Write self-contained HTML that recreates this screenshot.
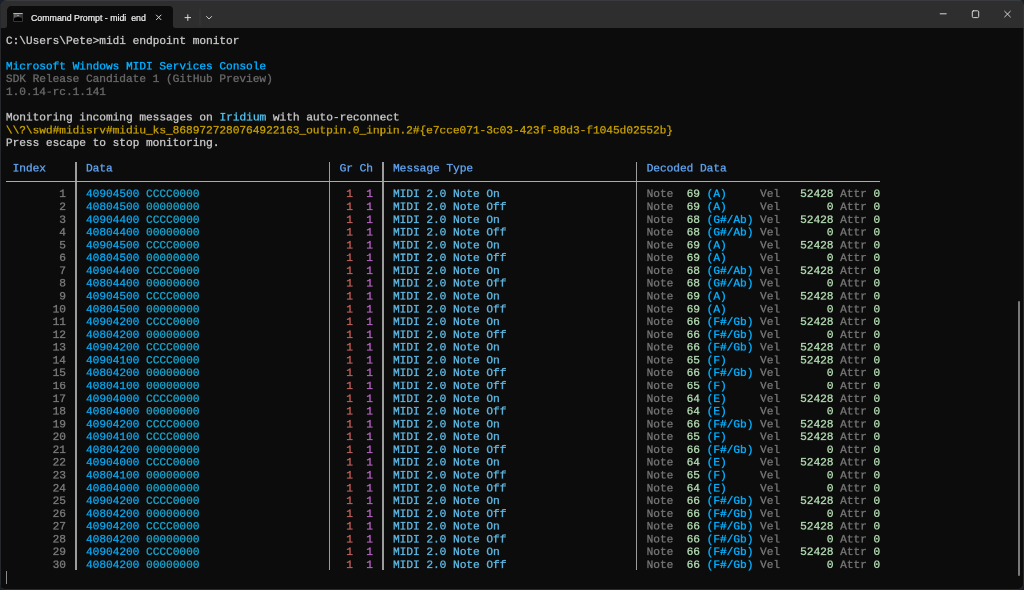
<!DOCTYPE html>
<html><head><meta charset="utf-8"><style>
html,body{margin:0;padding:0;width:1024px;height:590px;overflow:hidden;background:#18202b}
#frtr{position:absolute;left:1018px;top:0;width:6px;height:28px;background:#343639;border-top-right-radius:7px}
#frame{position:absolute;left:0;top:0;width:1024px;height:590px;background:#282a2e;border-radius:7px 7px 6px 6px}
#win{position:absolute;left:0;top:0;width:1022.6px;height:588.6px;background:#0c0c0c;border-radius:7px 4px 5px 5px;overflow:hidden}
#sb{position:absolute;left:1018.1px;top:300.8px;width:2px;height:275px;border-radius:1px;background:#7a7a7a}
#cur{position:absolute;left:5.9px;top:571px;width:1.1px;height:13px;background:#8a8a8a}
#lb{position:absolute;left:0;top:0;width:1.3px;height:590px;background:#26282c}
#bar{position:absolute;left:0;top:0;width:1024px;height:28px;background:#2e2e2e}
#topb{position:absolute;left:0;top:0;width:1024px;height:1.2px;background:#393b3e}
#icon{position:absolute;left:12.7px;top:12.7px;width:10.7px;height:9.1px;background:#363636;border-radius:1.2px;overflow:hidden}
#ibar{position:absolute;left:0;top:0;width:10.7px;height:1.5px;background:#b4b4b4}
#ibody{position:absolute;left:1.2px;top:1.8px;width:8.4px;height:6.3px;background:linear-gradient(90deg,#666,#4a4a4a 60%,#333)}
#idot{position:absolute;left:1.2px;top:4.0px;width:8.4px;height:4.1px;background:#000;border-radius:4.2px 4.2px 0 0 / 2px 2px 0 0}
#ilt{position:absolute;left:4.3px;top:2.3px;width:1.6px;height:1.4px;background:#9a9a9a;border-radius:1px}
#tabfoot{position:absolute;left:3px;top:24px;width:174px;height:4.2px;background:#0c0c0c}
#barL{position:absolute;left:0;top:1.2px;width:7px;height:27px;background:#2e2e2e;border-bottom-right-radius:2.5px}
#barR{position:absolute;left:172.6px;top:1.2px;width:852px;height:27px;background:#2e2e2e;border-bottom-left-radius:2.5px}
#tab{position:absolute;left:7px;top:6px;width:165.6px;height:22.2px;background:#0c0c0c;border-radius:4.5px 4px 0 0}
.t{position:absolute;white-space:pre;font-family:"Liberation Mono",monospace;font-size:22.4px;letter-spacing:-0.0942px;line-height:25.572px;height:25.572px;-webkit-text-stroke:0.72px currentColor}
#txt{position:absolute;left:0;top:0;width:2048px;height:1180px;transform-origin:0 0;transform:scale(0.5);will-change:transform}
.vs{position:absolute;width:1.5px;background:#9c9c9c}
.hs{position:absolute;height:1.5px;background:#aaaaaa}
#title{position:absolute;left:31px;top:11.8px;width:114.5px;overflow:hidden;font-family:"Liberation Sans",sans-serif;font-size:8.8px;line-height:12px;color:#f2f2f2;white-space:pre;-webkit-text-stroke:0.2px #f2f2f2;will-change:transform}
</style></head><body>
<div id="frame"></div>
<div id="frtr"></div>
<div id="win">

<div id="bar"></div>
<div id="topb"></div>
<div id="tab"></div>
<div id="tabfoot"></div>
<div id="barL"></div>
<div id="barR"></div>
<div id="icon"><div id="ibar"></div><div id="ibody"></div><div id="idot"></div><div id="ilt"></div></div>
<div id="title">Command Prompt - midi  end</div>
<svg id="svgc" width="1024" height="30" style="position:absolute;left:0;top:0">
 <g stroke="#d6d6d6" stroke-width="1" fill="none" stroke-linecap="square">
  <path d="M156.1 14.8 L161.3 20.0 M161.3 14.8 L156.1 20.0" stroke-linecap="butt"/>
  <path d="M184.6 17.6 H191.0 M187.8 14.4 V20.8" stroke="#dcdcdc" stroke-linecap="butt"/>
  <path d="M206.3 16.2 L209.1 19.0 L211.9 16.2" stroke="#cfcfcf" stroke-linecap="butt"/>
  <path d="M939.8 13.8 H946.6" stroke-linecap="butt"/>
  <rect x="972.3" y="10.8" width="6.4" height="6.8" rx="1.1"/>
  <path d="M1004.4 11.0 L1010.6 17.2 M1010.6 11.0 L1004.4 17.2" stroke-linecap="butt"/>
 </g>
 <path d="M200 9 V25.5" stroke="#383838" stroke-width="1"/>
</svg>

<div id="txt">
<div class="t" style="left:11.800px;top:69.600px;color:#c2c2c2">C:\Users\Pete&gt;midi endpoint monitor</div>
<div class="t" style="left:11.800px;top:120.744px;color:#00afff">Microsoft Windows MIDI Services Console</div>
<div class="t" style="left:11.800px;top:146.316px;color:#666666">SDK Release Candidate 1 (GitHub Preview)</div>
<div class="t" style="left:11.800px;top:171.888px;color:#666666">1.0.14-rc.1.141</div>
<div class="t" style="left:11.800px;top:223.032px;color:#c2c2c2">Monitoring incoming messages on </div>
<div class="t" style="left:438.936px;top:223.032px;color:#50c0ec">Iridium</div>
<div class="t" style="left:532.372px;top:223.032px;color:#c2c2c2"> with auto-reconnect</div>
<div class="t" style="left:11.800px;top:248.604px;color:#c09b00">\\?\swd#midisrv#midiu_ks_8689727280764922163_outpin.0_inpin.2#{e7cce071-3c03-423f-88d3-f1045d02552b}</div>
<div class="t" style="left:11.800px;top:274.176px;color:#c2c2c2">Press escape to stop monitoring.</div>
<div class="t" style="left:25.148px;top:325.320px;color:#5fa0ea">Index</div>
<div class="t" style="left:171.976px;top:325.320px;color:#5fa0ea">Data</div>
<div class="t" style="left:679.200px;top:325.320px;color:#5fa0ea">Gr Ch</div>
<div class="t" style="left:785.984px;top:325.320px;color:#5fa0ea">Message Type</div>
<div class="t" style="left:1293.208px;top:325.320px;color:#5fa0ea">Decoded Data</div>
<div class="t" style="left:118.584px;top:376.464px;color:#787878">1</div>
<div class="t" style="left:171.976px;top:376.464px;color:#0aa0e6">40904500</div>
<div class="t" style="left:292.108px;top:376.464px;color:#16a0c8">CCCC0000</div>
<div class="t" style="left:692.548px;top:376.464px;color:#c45f59">1</div>
<div class="t" style="left:732.592px;top:376.464px;color:#b662c4">1</div>
<div class="t" style="left:785.984px;top:376.464px;color:#5cb4de">MIDI 2.0 Note On</div>
<div class="t" style="left:1293.208px;top:376.464px;color:#737373">Note</div>
<div class="t" style="left:1373.296px;top:376.464px;color:#afd7af">69</div>
<div class="t" style="left:1413.340px;top:376.464px;color:#00afff">(A)</div>
<div class="t" style="left:1520.124px;top:376.464px;color:#737373">Vel</div>
<div class="t" style="left:1600.212px;top:376.464px;color:#afd7af">52428</div>
<div class="t" style="left:1680.300px;top:376.464px;color:#737373">Attr</div>
<div class="t" style="left:1747.040px;top:376.464px;color:#afd7af">0</div>
<div class="t" style="left:118.584px;top:402.036px;color:#787878">2</div>
<div class="t" style="left:171.976px;top:402.036px;color:#0aa0e6">40804500</div>
<div class="t" style="left:292.108px;top:402.036px;color:#16a0c8">00000000</div>
<div class="t" style="left:692.548px;top:402.036px;color:#c45f59">1</div>
<div class="t" style="left:732.592px;top:402.036px;color:#b662c4">1</div>
<div class="t" style="left:785.984px;top:402.036px;color:#5cb4de">MIDI 2.0 Note Off</div>
<div class="t" style="left:1293.208px;top:402.036px;color:#737373">Note</div>
<div class="t" style="left:1373.296px;top:402.036px;color:#afd7af">69</div>
<div class="t" style="left:1413.340px;top:402.036px;color:#00afff">(A)</div>
<div class="t" style="left:1520.124px;top:402.036px;color:#737373">Vel</div>
<div class="t" style="left:1653.604px;top:402.036px;color:#afd7af">0</div>
<div class="t" style="left:1680.300px;top:402.036px;color:#737373">Attr</div>
<div class="t" style="left:1747.040px;top:402.036px;color:#afd7af">0</div>
<div class="t" style="left:118.584px;top:427.608px;color:#787878">3</div>
<div class="t" style="left:171.976px;top:427.608px;color:#0aa0e6">40904400</div>
<div class="t" style="left:292.108px;top:427.608px;color:#16a0c8">CCCC0000</div>
<div class="t" style="left:692.548px;top:427.608px;color:#c45f59">1</div>
<div class="t" style="left:732.592px;top:427.608px;color:#b662c4">1</div>
<div class="t" style="left:785.984px;top:427.608px;color:#5cb4de">MIDI 2.0 Note On</div>
<div class="t" style="left:1293.208px;top:427.608px;color:#737373">Note</div>
<div class="t" style="left:1373.296px;top:427.608px;color:#afd7af">68</div>
<div class="t" style="left:1413.340px;top:427.608px;color:#00afff">(G#/Ab)</div>
<div class="t" style="left:1520.124px;top:427.608px;color:#737373">Vel</div>
<div class="t" style="left:1600.212px;top:427.608px;color:#afd7af">52428</div>
<div class="t" style="left:1680.300px;top:427.608px;color:#737373">Attr</div>
<div class="t" style="left:1747.040px;top:427.608px;color:#afd7af">0</div>
<div class="t" style="left:118.584px;top:453.180px;color:#787878">4</div>
<div class="t" style="left:171.976px;top:453.180px;color:#0aa0e6">40804400</div>
<div class="t" style="left:292.108px;top:453.180px;color:#16a0c8">00000000</div>
<div class="t" style="left:692.548px;top:453.180px;color:#c45f59">1</div>
<div class="t" style="left:732.592px;top:453.180px;color:#b662c4">1</div>
<div class="t" style="left:785.984px;top:453.180px;color:#5cb4de">MIDI 2.0 Note Off</div>
<div class="t" style="left:1293.208px;top:453.180px;color:#737373">Note</div>
<div class="t" style="left:1373.296px;top:453.180px;color:#afd7af">68</div>
<div class="t" style="left:1413.340px;top:453.180px;color:#00afff">(G#/Ab)</div>
<div class="t" style="left:1520.124px;top:453.180px;color:#737373">Vel</div>
<div class="t" style="left:1653.604px;top:453.180px;color:#afd7af">0</div>
<div class="t" style="left:1680.300px;top:453.180px;color:#737373">Attr</div>
<div class="t" style="left:1747.040px;top:453.180px;color:#afd7af">0</div>
<div class="t" style="left:118.584px;top:478.752px;color:#787878">5</div>
<div class="t" style="left:171.976px;top:478.752px;color:#0aa0e6">40904500</div>
<div class="t" style="left:292.108px;top:478.752px;color:#16a0c8">CCCC0000</div>
<div class="t" style="left:692.548px;top:478.752px;color:#c45f59">1</div>
<div class="t" style="left:732.592px;top:478.752px;color:#b662c4">1</div>
<div class="t" style="left:785.984px;top:478.752px;color:#5cb4de">MIDI 2.0 Note On</div>
<div class="t" style="left:1293.208px;top:478.752px;color:#737373">Note</div>
<div class="t" style="left:1373.296px;top:478.752px;color:#afd7af">69</div>
<div class="t" style="left:1413.340px;top:478.752px;color:#00afff">(A)</div>
<div class="t" style="left:1520.124px;top:478.752px;color:#737373">Vel</div>
<div class="t" style="left:1600.212px;top:478.752px;color:#afd7af">52428</div>
<div class="t" style="left:1680.300px;top:478.752px;color:#737373">Attr</div>
<div class="t" style="left:1747.040px;top:478.752px;color:#afd7af">0</div>
<div class="t" style="left:118.584px;top:504.324px;color:#787878">6</div>
<div class="t" style="left:171.976px;top:504.324px;color:#0aa0e6">40804500</div>
<div class="t" style="left:292.108px;top:504.324px;color:#16a0c8">00000000</div>
<div class="t" style="left:692.548px;top:504.324px;color:#c45f59">1</div>
<div class="t" style="left:732.592px;top:504.324px;color:#b662c4">1</div>
<div class="t" style="left:785.984px;top:504.324px;color:#5cb4de">MIDI 2.0 Note Off</div>
<div class="t" style="left:1293.208px;top:504.324px;color:#737373">Note</div>
<div class="t" style="left:1373.296px;top:504.324px;color:#afd7af">69</div>
<div class="t" style="left:1413.340px;top:504.324px;color:#00afff">(A)</div>
<div class="t" style="left:1520.124px;top:504.324px;color:#737373">Vel</div>
<div class="t" style="left:1653.604px;top:504.324px;color:#afd7af">0</div>
<div class="t" style="left:1680.300px;top:504.324px;color:#737373">Attr</div>
<div class="t" style="left:1747.040px;top:504.324px;color:#afd7af">0</div>
<div class="t" style="left:118.584px;top:529.896px;color:#787878">7</div>
<div class="t" style="left:171.976px;top:529.896px;color:#0aa0e6">40904400</div>
<div class="t" style="left:292.108px;top:529.896px;color:#16a0c8">CCCC0000</div>
<div class="t" style="left:692.548px;top:529.896px;color:#c45f59">1</div>
<div class="t" style="left:732.592px;top:529.896px;color:#b662c4">1</div>
<div class="t" style="left:785.984px;top:529.896px;color:#5cb4de">MIDI 2.0 Note On</div>
<div class="t" style="left:1293.208px;top:529.896px;color:#737373">Note</div>
<div class="t" style="left:1373.296px;top:529.896px;color:#afd7af">68</div>
<div class="t" style="left:1413.340px;top:529.896px;color:#00afff">(G#/Ab)</div>
<div class="t" style="left:1520.124px;top:529.896px;color:#737373">Vel</div>
<div class="t" style="left:1600.212px;top:529.896px;color:#afd7af">52428</div>
<div class="t" style="left:1680.300px;top:529.896px;color:#737373">Attr</div>
<div class="t" style="left:1747.040px;top:529.896px;color:#afd7af">0</div>
<div class="t" style="left:118.584px;top:555.468px;color:#787878">8</div>
<div class="t" style="left:171.976px;top:555.468px;color:#0aa0e6">40804400</div>
<div class="t" style="left:292.108px;top:555.468px;color:#16a0c8">00000000</div>
<div class="t" style="left:692.548px;top:555.468px;color:#c45f59">1</div>
<div class="t" style="left:732.592px;top:555.468px;color:#b662c4">1</div>
<div class="t" style="left:785.984px;top:555.468px;color:#5cb4de">MIDI 2.0 Note Off</div>
<div class="t" style="left:1293.208px;top:555.468px;color:#737373">Note</div>
<div class="t" style="left:1373.296px;top:555.468px;color:#afd7af">68</div>
<div class="t" style="left:1413.340px;top:555.468px;color:#00afff">(G#/Ab)</div>
<div class="t" style="left:1520.124px;top:555.468px;color:#737373">Vel</div>
<div class="t" style="left:1653.604px;top:555.468px;color:#afd7af">0</div>
<div class="t" style="left:1680.300px;top:555.468px;color:#737373">Attr</div>
<div class="t" style="left:1747.040px;top:555.468px;color:#afd7af">0</div>
<div class="t" style="left:118.584px;top:581.040px;color:#787878">9</div>
<div class="t" style="left:171.976px;top:581.040px;color:#0aa0e6">40904500</div>
<div class="t" style="left:292.108px;top:581.040px;color:#16a0c8">CCCC0000</div>
<div class="t" style="left:692.548px;top:581.040px;color:#c45f59">1</div>
<div class="t" style="left:732.592px;top:581.040px;color:#b662c4">1</div>
<div class="t" style="left:785.984px;top:581.040px;color:#5cb4de">MIDI 2.0 Note On</div>
<div class="t" style="left:1293.208px;top:581.040px;color:#737373">Note</div>
<div class="t" style="left:1373.296px;top:581.040px;color:#afd7af">69</div>
<div class="t" style="left:1413.340px;top:581.040px;color:#00afff">(A)</div>
<div class="t" style="left:1520.124px;top:581.040px;color:#737373">Vel</div>
<div class="t" style="left:1600.212px;top:581.040px;color:#afd7af">52428</div>
<div class="t" style="left:1680.300px;top:581.040px;color:#737373">Attr</div>
<div class="t" style="left:1747.040px;top:581.040px;color:#afd7af">0</div>
<div class="t" style="left:105.236px;top:606.612px;color:#787878">10</div>
<div class="t" style="left:171.976px;top:606.612px;color:#0aa0e6">40804500</div>
<div class="t" style="left:292.108px;top:606.612px;color:#16a0c8">00000000</div>
<div class="t" style="left:692.548px;top:606.612px;color:#c45f59">1</div>
<div class="t" style="left:732.592px;top:606.612px;color:#b662c4">1</div>
<div class="t" style="left:785.984px;top:606.612px;color:#5cb4de">MIDI 2.0 Note Off</div>
<div class="t" style="left:1293.208px;top:606.612px;color:#737373">Note</div>
<div class="t" style="left:1373.296px;top:606.612px;color:#afd7af">69</div>
<div class="t" style="left:1413.340px;top:606.612px;color:#00afff">(A)</div>
<div class="t" style="left:1520.124px;top:606.612px;color:#737373">Vel</div>
<div class="t" style="left:1653.604px;top:606.612px;color:#afd7af">0</div>
<div class="t" style="left:1680.300px;top:606.612px;color:#737373">Attr</div>
<div class="t" style="left:1747.040px;top:606.612px;color:#afd7af">0</div>
<div class="t" style="left:105.236px;top:632.184px;color:#787878">11</div>
<div class="t" style="left:171.976px;top:632.184px;color:#0aa0e6">40904200</div>
<div class="t" style="left:292.108px;top:632.184px;color:#16a0c8">CCCC0000</div>
<div class="t" style="left:692.548px;top:632.184px;color:#c45f59">1</div>
<div class="t" style="left:732.592px;top:632.184px;color:#b662c4">1</div>
<div class="t" style="left:785.984px;top:632.184px;color:#5cb4de">MIDI 2.0 Note On</div>
<div class="t" style="left:1293.208px;top:632.184px;color:#737373">Note</div>
<div class="t" style="left:1373.296px;top:632.184px;color:#afd7af">66</div>
<div class="t" style="left:1413.340px;top:632.184px;color:#00afff">(F#/Gb)</div>
<div class="t" style="left:1520.124px;top:632.184px;color:#737373">Vel</div>
<div class="t" style="left:1600.212px;top:632.184px;color:#afd7af">52428</div>
<div class="t" style="left:1680.300px;top:632.184px;color:#737373">Attr</div>
<div class="t" style="left:1747.040px;top:632.184px;color:#afd7af">0</div>
<div class="t" style="left:105.236px;top:657.756px;color:#787878">12</div>
<div class="t" style="left:171.976px;top:657.756px;color:#0aa0e6">40804200</div>
<div class="t" style="left:292.108px;top:657.756px;color:#16a0c8">00000000</div>
<div class="t" style="left:692.548px;top:657.756px;color:#c45f59">1</div>
<div class="t" style="left:732.592px;top:657.756px;color:#b662c4">1</div>
<div class="t" style="left:785.984px;top:657.756px;color:#5cb4de">MIDI 2.0 Note Off</div>
<div class="t" style="left:1293.208px;top:657.756px;color:#737373">Note</div>
<div class="t" style="left:1373.296px;top:657.756px;color:#afd7af">66</div>
<div class="t" style="left:1413.340px;top:657.756px;color:#00afff">(F#/Gb)</div>
<div class="t" style="left:1520.124px;top:657.756px;color:#737373">Vel</div>
<div class="t" style="left:1653.604px;top:657.756px;color:#afd7af">0</div>
<div class="t" style="left:1680.300px;top:657.756px;color:#737373">Attr</div>
<div class="t" style="left:1747.040px;top:657.756px;color:#afd7af">0</div>
<div class="t" style="left:105.236px;top:683.328px;color:#787878">13</div>
<div class="t" style="left:171.976px;top:683.328px;color:#0aa0e6">40904200</div>
<div class="t" style="left:292.108px;top:683.328px;color:#16a0c8">CCCC0000</div>
<div class="t" style="left:692.548px;top:683.328px;color:#c45f59">1</div>
<div class="t" style="left:732.592px;top:683.328px;color:#b662c4">1</div>
<div class="t" style="left:785.984px;top:683.328px;color:#5cb4de">MIDI 2.0 Note On</div>
<div class="t" style="left:1293.208px;top:683.328px;color:#737373">Note</div>
<div class="t" style="left:1373.296px;top:683.328px;color:#afd7af">66</div>
<div class="t" style="left:1413.340px;top:683.328px;color:#00afff">(F#/Gb)</div>
<div class="t" style="left:1520.124px;top:683.328px;color:#737373">Vel</div>
<div class="t" style="left:1600.212px;top:683.328px;color:#afd7af">52428</div>
<div class="t" style="left:1680.300px;top:683.328px;color:#737373">Attr</div>
<div class="t" style="left:1747.040px;top:683.328px;color:#afd7af">0</div>
<div class="t" style="left:105.236px;top:708.900px;color:#787878">14</div>
<div class="t" style="left:171.976px;top:708.900px;color:#0aa0e6">40904100</div>
<div class="t" style="left:292.108px;top:708.900px;color:#16a0c8">CCCC0000</div>
<div class="t" style="left:692.548px;top:708.900px;color:#c45f59">1</div>
<div class="t" style="left:732.592px;top:708.900px;color:#b662c4">1</div>
<div class="t" style="left:785.984px;top:708.900px;color:#5cb4de">MIDI 2.0 Note On</div>
<div class="t" style="left:1293.208px;top:708.900px;color:#737373">Note</div>
<div class="t" style="left:1373.296px;top:708.900px;color:#afd7af">65</div>
<div class="t" style="left:1413.340px;top:708.900px;color:#00afff">(F)</div>
<div class="t" style="left:1520.124px;top:708.900px;color:#737373">Vel</div>
<div class="t" style="left:1600.212px;top:708.900px;color:#afd7af">52428</div>
<div class="t" style="left:1680.300px;top:708.900px;color:#737373">Attr</div>
<div class="t" style="left:1747.040px;top:708.900px;color:#afd7af">0</div>
<div class="t" style="left:105.236px;top:734.472px;color:#787878">15</div>
<div class="t" style="left:171.976px;top:734.472px;color:#0aa0e6">40804200</div>
<div class="t" style="left:292.108px;top:734.472px;color:#16a0c8">00000000</div>
<div class="t" style="left:692.548px;top:734.472px;color:#c45f59">1</div>
<div class="t" style="left:732.592px;top:734.472px;color:#b662c4">1</div>
<div class="t" style="left:785.984px;top:734.472px;color:#5cb4de">MIDI 2.0 Note Off</div>
<div class="t" style="left:1293.208px;top:734.472px;color:#737373">Note</div>
<div class="t" style="left:1373.296px;top:734.472px;color:#afd7af">66</div>
<div class="t" style="left:1413.340px;top:734.472px;color:#00afff">(F#/Gb)</div>
<div class="t" style="left:1520.124px;top:734.472px;color:#737373">Vel</div>
<div class="t" style="left:1653.604px;top:734.472px;color:#afd7af">0</div>
<div class="t" style="left:1680.300px;top:734.472px;color:#737373">Attr</div>
<div class="t" style="left:1747.040px;top:734.472px;color:#afd7af">0</div>
<div class="t" style="left:105.236px;top:760.044px;color:#787878">16</div>
<div class="t" style="left:171.976px;top:760.044px;color:#0aa0e6">40804100</div>
<div class="t" style="left:292.108px;top:760.044px;color:#16a0c8">00000000</div>
<div class="t" style="left:692.548px;top:760.044px;color:#c45f59">1</div>
<div class="t" style="left:732.592px;top:760.044px;color:#b662c4">1</div>
<div class="t" style="left:785.984px;top:760.044px;color:#5cb4de">MIDI 2.0 Note Off</div>
<div class="t" style="left:1293.208px;top:760.044px;color:#737373">Note</div>
<div class="t" style="left:1373.296px;top:760.044px;color:#afd7af">65</div>
<div class="t" style="left:1413.340px;top:760.044px;color:#00afff">(F)</div>
<div class="t" style="left:1520.124px;top:760.044px;color:#737373">Vel</div>
<div class="t" style="left:1653.604px;top:760.044px;color:#afd7af">0</div>
<div class="t" style="left:1680.300px;top:760.044px;color:#737373">Attr</div>
<div class="t" style="left:1747.040px;top:760.044px;color:#afd7af">0</div>
<div class="t" style="left:105.236px;top:785.616px;color:#787878">17</div>
<div class="t" style="left:171.976px;top:785.616px;color:#0aa0e6">40904000</div>
<div class="t" style="left:292.108px;top:785.616px;color:#16a0c8">CCCC0000</div>
<div class="t" style="left:692.548px;top:785.616px;color:#c45f59">1</div>
<div class="t" style="left:732.592px;top:785.616px;color:#b662c4">1</div>
<div class="t" style="left:785.984px;top:785.616px;color:#5cb4de">MIDI 2.0 Note On</div>
<div class="t" style="left:1293.208px;top:785.616px;color:#737373">Note</div>
<div class="t" style="left:1373.296px;top:785.616px;color:#afd7af">64</div>
<div class="t" style="left:1413.340px;top:785.616px;color:#00afff">(E)</div>
<div class="t" style="left:1520.124px;top:785.616px;color:#737373">Vel</div>
<div class="t" style="left:1600.212px;top:785.616px;color:#afd7af">52428</div>
<div class="t" style="left:1680.300px;top:785.616px;color:#737373">Attr</div>
<div class="t" style="left:1747.040px;top:785.616px;color:#afd7af">0</div>
<div class="t" style="left:105.236px;top:811.188px;color:#787878">18</div>
<div class="t" style="left:171.976px;top:811.188px;color:#0aa0e6">40804000</div>
<div class="t" style="left:292.108px;top:811.188px;color:#16a0c8">00000000</div>
<div class="t" style="left:692.548px;top:811.188px;color:#c45f59">1</div>
<div class="t" style="left:732.592px;top:811.188px;color:#b662c4">1</div>
<div class="t" style="left:785.984px;top:811.188px;color:#5cb4de">MIDI 2.0 Note Off</div>
<div class="t" style="left:1293.208px;top:811.188px;color:#737373">Note</div>
<div class="t" style="left:1373.296px;top:811.188px;color:#afd7af">64</div>
<div class="t" style="left:1413.340px;top:811.188px;color:#00afff">(E)</div>
<div class="t" style="left:1520.124px;top:811.188px;color:#737373">Vel</div>
<div class="t" style="left:1653.604px;top:811.188px;color:#afd7af">0</div>
<div class="t" style="left:1680.300px;top:811.188px;color:#737373">Attr</div>
<div class="t" style="left:1747.040px;top:811.188px;color:#afd7af">0</div>
<div class="t" style="left:105.236px;top:836.760px;color:#787878">19</div>
<div class="t" style="left:171.976px;top:836.760px;color:#0aa0e6">40904200</div>
<div class="t" style="left:292.108px;top:836.760px;color:#16a0c8">CCCC0000</div>
<div class="t" style="left:692.548px;top:836.760px;color:#c45f59">1</div>
<div class="t" style="left:732.592px;top:836.760px;color:#b662c4">1</div>
<div class="t" style="left:785.984px;top:836.760px;color:#5cb4de">MIDI 2.0 Note On</div>
<div class="t" style="left:1293.208px;top:836.760px;color:#737373">Note</div>
<div class="t" style="left:1373.296px;top:836.760px;color:#afd7af">66</div>
<div class="t" style="left:1413.340px;top:836.760px;color:#00afff">(F#/Gb)</div>
<div class="t" style="left:1520.124px;top:836.760px;color:#737373">Vel</div>
<div class="t" style="left:1600.212px;top:836.760px;color:#afd7af">52428</div>
<div class="t" style="left:1680.300px;top:836.760px;color:#737373">Attr</div>
<div class="t" style="left:1747.040px;top:836.760px;color:#afd7af">0</div>
<div class="t" style="left:105.236px;top:862.332px;color:#787878">20</div>
<div class="t" style="left:171.976px;top:862.332px;color:#0aa0e6">40904100</div>
<div class="t" style="left:292.108px;top:862.332px;color:#16a0c8">CCCC0000</div>
<div class="t" style="left:692.548px;top:862.332px;color:#c45f59">1</div>
<div class="t" style="left:732.592px;top:862.332px;color:#b662c4">1</div>
<div class="t" style="left:785.984px;top:862.332px;color:#5cb4de">MIDI 2.0 Note On</div>
<div class="t" style="left:1293.208px;top:862.332px;color:#737373">Note</div>
<div class="t" style="left:1373.296px;top:862.332px;color:#afd7af">65</div>
<div class="t" style="left:1413.340px;top:862.332px;color:#00afff">(F)</div>
<div class="t" style="left:1520.124px;top:862.332px;color:#737373">Vel</div>
<div class="t" style="left:1600.212px;top:862.332px;color:#afd7af">52428</div>
<div class="t" style="left:1680.300px;top:862.332px;color:#737373">Attr</div>
<div class="t" style="left:1747.040px;top:862.332px;color:#afd7af">0</div>
<div class="t" style="left:105.236px;top:887.904px;color:#787878">21</div>
<div class="t" style="left:171.976px;top:887.904px;color:#0aa0e6">40804200</div>
<div class="t" style="left:292.108px;top:887.904px;color:#16a0c8">00000000</div>
<div class="t" style="left:692.548px;top:887.904px;color:#c45f59">1</div>
<div class="t" style="left:732.592px;top:887.904px;color:#b662c4">1</div>
<div class="t" style="left:785.984px;top:887.904px;color:#5cb4de">MIDI 2.0 Note Off</div>
<div class="t" style="left:1293.208px;top:887.904px;color:#737373">Note</div>
<div class="t" style="left:1373.296px;top:887.904px;color:#afd7af">66</div>
<div class="t" style="left:1413.340px;top:887.904px;color:#00afff">(F#/Gb)</div>
<div class="t" style="left:1520.124px;top:887.904px;color:#737373">Vel</div>
<div class="t" style="left:1653.604px;top:887.904px;color:#afd7af">0</div>
<div class="t" style="left:1680.300px;top:887.904px;color:#737373">Attr</div>
<div class="t" style="left:1747.040px;top:887.904px;color:#afd7af">0</div>
<div class="t" style="left:105.236px;top:913.476px;color:#787878">22</div>
<div class="t" style="left:171.976px;top:913.476px;color:#0aa0e6">40904000</div>
<div class="t" style="left:292.108px;top:913.476px;color:#16a0c8">CCCC0000</div>
<div class="t" style="left:692.548px;top:913.476px;color:#c45f59">1</div>
<div class="t" style="left:732.592px;top:913.476px;color:#b662c4">1</div>
<div class="t" style="left:785.984px;top:913.476px;color:#5cb4de">MIDI 2.0 Note On</div>
<div class="t" style="left:1293.208px;top:913.476px;color:#737373">Note</div>
<div class="t" style="left:1373.296px;top:913.476px;color:#afd7af">64</div>
<div class="t" style="left:1413.340px;top:913.476px;color:#00afff">(E)</div>
<div class="t" style="left:1520.124px;top:913.476px;color:#737373">Vel</div>
<div class="t" style="left:1600.212px;top:913.476px;color:#afd7af">52428</div>
<div class="t" style="left:1680.300px;top:913.476px;color:#737373">Attr</div>
<div class="t" style="left:1747.040px;top:913.476px;color:#afd7af">0</div>
<div class="t" style="left:105.236px;top:939.048px;color:#787878">23</div>
<div class="t" style="left:171.976px;top:939.048px;color:#0aa0e6">40804100</div>
<div class="t" style="left:292.108px;top:939.048px;color:#16a0c8">00000000</div>
<div class="t" style="left:692.548px;top:939.048px;color:#c45f59">1</div>
<div class="t" style="left:732.592px;top:939.048px;color:#b662c4">1</div>
<div class="t" style="left:785.984px;top:939.048px;color:#5cb4de">MIDI 2.0 Note Off</div>
<div class="t" style="left:1293.208px;top:939.048px;color:#737373">Note</div>
<div class="t" style="left:1373.296px;top:939.048px;color:#afd7af">65</div>
<div class="t" style="left:1413.340px;top:939.048px;color:#00afff">(F)</div>
<div class="t" style="left:1520.124px;top:939.048px;color:#737373">Vel</div>
<div class="t" style="left:1653.604px;top:939.048px;color:#afd7af">0</div>
<div class="t" style="left:1680.300px;top:939.048px;color:#737373">Attr</div>
<div class="t" style="left:1747.040px;top:939.048px;color:#afd7af">0</div>
<div class="t" style="left:105.236px;top:964.620px;color:#787878">24</div>
<div class="t" style="left:171.976px;top:964.620px;color:#0aa0e6">40804000</div>
<div class="t" style="left:292.108px;top:964.620px;color:#16a0c8">00000000</div>
<div class="t" style="left:692.548px;top:964.620px;color:#c45f59">1</div>
<div class="t" style="left:732.592px;top:964.620px;color:#b662c4">1</div>
<div class="t" style="left:785.984px;top:964.620px;color:#5cb4de">MIDI 2.0 Note Off</div>
<div class="t" style="left:1293.208px;top:964.620px;color:#737373">Note</div>
<div class="t" style="left:1373.296px;top:964.620px;color:#afd7af">64</div>
<div class="t" style="left:1413.340px;top:964.620px;color:#00afff">(E)</div>
<div class="t" style="left:1520.124px;top:964.620px;color:#737373">Vel</div>
<div class="t" style="left:1653.604px;top:964.620px;color:#afd7af">0</div>
<div class="t" style="left:1680.300px;top:964.620px;color:#737373">Attr</div>
<div class="t" style="left:1747.040px;top:964.620px;color:#afd7af">0</div>
<div class="t" style="left:105.236px;top:990.192px;color:#787878">25</div>
<div class="t" style="left:171.976px;top:990.192px;color:#0aa0e6">40904200</div>
<div class="t" style="left:292.108px;top:990.192px;color:#16a0c8">CCCC0000</div>
<div class="t" style="left:692.548px;top:990.192px;color:#c45f59">1</div>
<div class="t" style="left:732.592px;top:990.192px;color:#b662c4">1</div>
<div class="t" style="left:785.984px;top:990.192px;color:#5cb4de">MIDI 2.0 Note On</div>
<div class="t" style="left:1293.208px;top:990.192px;color:#737373">Note</div>
<div class="t" style="left:1373.296px;top:990.192px;color:#afd7af">66</div>
<div class="t" style="left:1413.340px;top:990.192px;color:#00afff">(F#/Gb)</div>
<div class="t" style="left:1520.124px;top:990.192px;color:#737373">Vel</div>
<div class="t" style="left:1600.212px;top:990.192px;color:#afd7af">52428</div>
<div class="t" style="left:1680.300px;top:990.192px;color:#737373">Attr</div>
<div class="t" style="left:1747.040px;top:990.192px;color:#afd7af">0</div>
<div class="t" style="left:105.236px;top:1015.764px;color:#787878">26</div>
<div class="t" style="left:171.976px;top:1015.764px;color:#0aa0e6">40804200</div>
<div class="t" style="left:292.108px;top:1015.764px;color:#16a0c8">00000000</div>
<div class="t" style="left:692.548px;top:1015.764px;color:#c45f59">1</div>
<div class="t" style="left:732.592px;top:1015.764px;color:#b662c4">1</div>
<div class="t" style="left:785.984px;top:1015.764px;color:#5cb4de">MIDI 2.0 Note Off</div>
<div class="t" style="left:1293.208px;top:1015.764px;color:#737373">Note</div>
<div class="t" style="left:1373.296px;top:1015.764px;color:#afd7af">66</div>
<div class="t" style="left:1413.340px;top:1015.764px;color:#00afff">(F#/Gb)</div>
<div class="t" style="left:1520.124px;top:1015.764px;color:#737373">Vel</div>
<div class="t" style="left:1653.604px;top:1015.764px;color:#afd7af">0</div>
<div class="t" style="left:1680.300px;top:1015.764px;color:#737373">Attr</div>
<div class="t" style="left:1747.040px;top:1015.764px;color:#afd7af">0</div>
<div class="t" style="left:105.236px;top:1041.336px;color:#787878">27</div>
<div class="t" style="left:171.976px;top:1041.336px;color:#0aa0e6">40904200</div>
<div class="t" style="left:292.108px;top:1041.336px;color:#16a0c8">CCCC0000</div>
<div class="t" style="left:692.548px;top:1041.336px;color:#c45f59">1</div>
<div class="t" style="left:732.592px;top:1041.336px;color:#b662c4">1</div>
<div class="t" style="left:785.984px;top:1041.336px;color:#5cb4de">MIDI 2.0 Note On</div>
<div class="t" style="left:1293.208px;top:1041.336px;color:#737373">Note</div>
<div class="t" style="left:1373.296px;top:1041.336px;color:#afd7af">66</div>
<div class="t" style="left:1413.340px;top:1041.336px;color:#00afff">(F#/Gb)</div>
<div class="t" style="left:1520.124px;top:1041.336px;color:#737373">Vel</div>
<div class="t" style="left:1600.212px;top:1041.336px;color:#afd7af">52428</div>
<div class="t" style="left:1680.300px;top:1041.336px;color:#737373">Attr</div>
<div class="t" style="left:1747.040px;top:1041.336px;color:#afd7af">0</div>
<div class="t" style="left:105.236px;top:1066.908px;color:#787878">28</div>
<div class="t" style="left:171.976px;top:1066.908px;color:#0aa0e6">40804200</div>
<div class="t" style="left:292.108px;top:1066.908px;color:#16a0c8">00000000</div>
<div class="t" style="left:692.548px;top:1066.908px;color:#c45f59">1</div>
<div class="t" style="left:732.592px;top:1066.908px;color:#b662c4">1</div>
<div class="t" style="left:785.984px;top:1066.908px;color:#5cb4de">MIDI 2.0 Note Off</div>
<div class="t" style="left:1293.208px;top:1066.908px;color:#737373">Note</div>
<div class="t" style="left:1373.296px;top:1066.908px;color:#afd7af">66</div>
<div class="t" style="left:1413.340px;top:1066.908px;color:#00afff">(F#/Gb)</div>
<div class="t" style="left:1520.124px;top:1066.908px;color:#737373">Vel</div>
<div class="t" style="left:1653.604px;top:1066.908px;color:#afd7af">0</div>
<div class="t" style="left:1680.300px;top:1066.908px;color:#737373">Attr</div>
<div class="t" style="left:1747.040px;top:1066.908px;color:#afd7af">0</div>
<div class="t" style="left:105.236px;top:1092.480px;color:#787878">29</div>
<div class="t" style="left:171.976px;top:1092.480px;color:#0aa0e6">40904200</div>
<div class="t" style="left:292.108px;top:1092.480px;color:#16a0c8">CCCC0000</div>
<div class="t" style="left:692.548px;top:1092.480px;color:#c45f59">1</div>
<div class="t" style="left:732.592px;top:1092.480px;color:#b662c4">1</div>
<div class="t" style="left:785.984px;top:1092.480px;color:#5cb4de">MIDI 2.0 Note On</div>
<div class="t" style="left:1293.208px;top:1092.480px;color:#737373">Note</div>
<div class="t" style="left:1373.296px;top:1092.480px;color:#afd7af">66</div>
<div class="t" style="left:1413.340px;top:1092.480px;color:#00afff">(F#/Gb)</div>
<div class="t" style="left:1520.124px;top:1092.480px;color:#737373">Vel</div>
<div class="t" style="left:1600.212px;top:1092.480px;color:#afd7af">52428</div>
<div class="t" style="left:1680.300px;top:1092.480px;color:#737373">Attr</div>
<div class="t" style="left:1747.040px;top:1092.480px;color:#afd7af">0</div>
<div class="t" style="left:105.236px;top:1118.052px;color:#787878">30</div>
<div class="t" style="left:171.976px;top:1118.052px;color:#0aa0e6">40804200</div>
<div class="t" style="left:292.108px;top:1118.052px;color:#16a0c8">00000000</div>
<div class="t" style="left:692.548px;top:1118.052px;color:#c45f59">1</div>
<div class="t" style="left:732.592px;top:1118.052px;color:#b662c4">1</div>
<div class="t" style="left:785.984px;top:1118.052px;color:#5cb4de">MIDI 2.0 Note Off</div>
<div class="t" style="left:1293.208px;top:1118.052px;color:#737373">Note</div>
<div class="t" style="left:1373.296px;top:1118.052px;color:#afd7af">66</div>
<div class="t" style="left:1413.340px;top:1118.052px;color:#00afff">(F#/Gb)</div>
<div class="t" style="left:1520.124px;top:1118.052px;color:#737373">Vel</div>
<div class="t" style="left:1653.604px;top:1118.052px;color:#afd7af">0</div>
<div class="t" style="left:1680.300px;top:1118.052px;color:#737373">Attr</div>
<div class="t" style="left:1747.040px;top:1118.052px;color:#afd7af">0</div>
</div>
<div class="vs" style="left:75.23px;top:161.86px;height:408.55px"></div>
<div class="vs" style="left:328.84px;top:161.86px;height:408.55px"></div>
<div class="vs" style="left:382.23px;top:161.86px;height:408.55px"></div>
<div class="vs" style="left:635.84px;top:161.86px;height:408.55px"></div>
<div class="hs" style="left:5.90px;top:180.59px;width:874.29px"></div>
<div id="lb"></div>
<div id="sb"></div>
<div id="cur"></div>
</div>
</body></html>
